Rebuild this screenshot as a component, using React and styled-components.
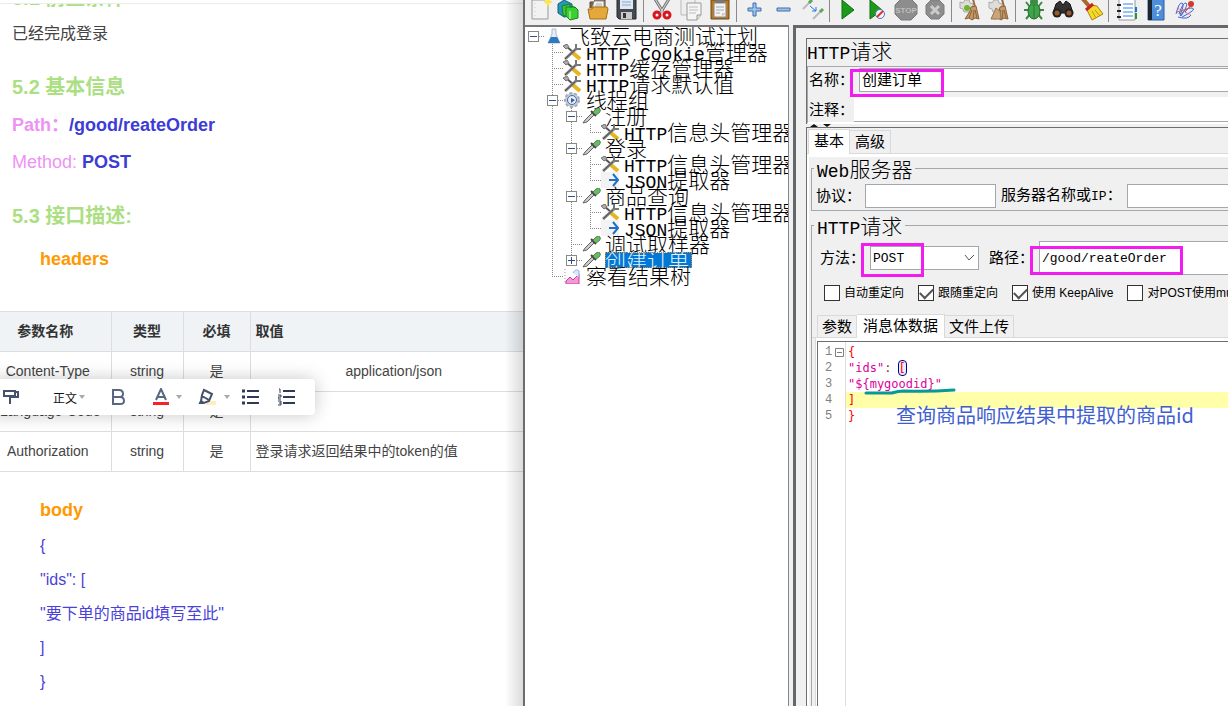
import React, { Component } from 'react';
import styled, { createGlobalStyle, css } from 'styled-components';

const sans = '"Liberation Sans", "Noto Sans CJK SC", sans-serif';
const song = '"Noto Sans CJK SC", sans-serif';
const mono = '"Liberation Mono", "Noto Sans CJK SC", monospace';

const GlobalStyle = createGlobalStyle`
    * { box-sizing: border-box; }
    body { margin: 0; background: #fff; overflow: hidden; }
    button, input, select { font: inherit; color: inherit; margin: 0; }
`;

const Page = styled.div`
    display: flex;
    height: 100vh;
    overflow: hidden;
    font-family: ${sans};
`;

/* ---------- document ---------- */

const Doc = styled.main`
    position: relative;
    flex: 0 0 523px;
    min-width: 0;
    overflow: hidden;
    color: #444;
`;
const DocTop = styled.div`
    height: 4px;
    border-bottom: 1px solid #ececec;
`;
const DocScroll = styled.div`
    overflow: hidden;
`;
const Heading = styled.h2`
    margin: ${p => p.$top}px 0 0 12px;
    font-size: 20px;
    line-height: 28px;
    color: #acdf83;
`;
const Line = styled.p`
    margin: ${p => p.$top}px 0 0 12px;
    font-size: ${p => p.$size || 18}px;
    line-height: 28px;
    color: ${p => p.$color || '#444'};

    strong { color: #3c3cd6; }
    b { color: #ee93f5; }
`;
const SubHeading = styled.h3`
    margin: ${p => p.$top}px 0 0 40px;
    font-size: 18px;
    line-height: 28px;
    color: #ff9900;
`;
const ParamTable = styled.table`
    width: 100%;
    margin-top: 38px;
    border-collapse: collapse;
    table-layout: fixed;
    font-size: 14px;
    line-height: 20px;

    th, td {
        height: 40px;
        padding: 0 0 2px;
        border: 1px solid #dcdde0;
        border-left: 0;
        text-align: center;
        white-space: nowrap;
    }
    th { background: #eff3f6; color: #333; }
    th:first-child { padding-right: 20px; }
    td:first-child { padding-right: 15px; }
    th:last-child { text-align: left; padding-left: 5px; }
    th:last-child, td:last-child { border-right: 0; }
`;
const ValueCell = styled.td`
    && {
        text-align: ${p => (p.$left ? 'left' : 'center')};
        padding-left: ${p => (p.$left ? 5 : 14)}px;
    }
`;
const JsonBody = styled.div`
    margin: 5px 0 0 40px;
    font-size: 16px;
    line-height: 34px;
    color: #4a42d8;
`;
const FloatBar = styled.div`
    position: absolute;
    left: -10px;
    top: 379px;
    width: 325px;
    height: 36px;
    display: flex;
    align-items: center;
    padding-left: 10px;
    background: #fff;
    border-radius: 4px;
    box-shadow: 0 0 18px rgba(0, 0, 0, 0.22);
`;
const FloatButton = styled.button`
    display: flex;
    align-items: center;
    justify-content: center;
    gap: 2px;
    width: ${p => p.$w}px;
    height: 36px;
    padding: 0;
    border: 0;
    background: none;
    font-size: 12px;
    color: #111;
`;
const Caret = styled.i`
    border: 3px solid transparent;
    border-top: 4px solid #aaa;
    border-bottom: 0;
    margin-left: ${p => p.$gap || 0}px;
`;

/* ---------- JMeter window ---------- */

const Win = styled.section`
    position: relative;
    flex: 1;
    min-width: 0;
    display: flex;
    flex-direction: column;
    overflow: hidden;
    border-left: 2px solid #6c6c70;
    background: #f0f0f0;
    color: #000;
`;
const Shade = styled.div`
    position: absolute;
    right: 0;
    top: 0;
    bottom: 0;
    width: 18px;
    background: linear-gradient(to right, rgba(0, 0, 0, 0), rgba(0, 0, 0, 0.14));
`;
const Toolbar = styled.div`
    display: flex;
    flex: none;
    height: 25px;
    overflow: hidden;
`;
const ToolButton = styled.button`
    flex: none;
    width: 29px;
    height: 26px;
    margin-top: -3px;
    padding: 0;
    border: 0;
    background: none;

    svg { display: block; margin: 0 auto; }
`;
const ToolSep = styled.span`
    flex: none;
    width: 1px;
    height: 22px;
    margin: 0 3px 0 2px;
    background: #8a8a8a;
`;
const Split = styled.div`
    flex: 1;
    display: flex;
    min-height: 0;
`;
const TreePane = styled.div`
    flex: 0 0 264px;
    overflow: hidden;
    margin-right: 4px;
    padding-top: 1px;
    border-top: 2px solid #77777c;
    border-right: 1px solid #828790;
    background: #fff;
`;
const TreeRow = styled.div`
    display: flex;
    height: 16px;
    white-space: nowrap;

    svg { flex: none; display: block; }
`;
const TreeText = styled.span`
    height: 16px;
    margin-left: ${p => p.$gap}px;
    padding-right: 3px;
    font-family: ${song};
    font-weight: 300;
    font-size: 21px;
    line-height: 14px;
    ${p => p.$selected && css`
        background: #0078d7;
        color: #e4f1fc;
        outline: 1px dotted #e08a30;
        outline-offset: -1px;
    `}
`;
const Latin = styled.span`
    font-family: ${mono};
    font-weight: 400;
    font-size: ${p => p.$size}px;
`;
const Editor = styled.div`
    flex: 1;
    min-width: 0;
    display: flex;
    flex-direction: column;
    padding: 10px 0 0 10px;
    border-top: 3px solid #66676b;
    border-left: 3px solid #66676b;
`;
const TitlePanel = styled.div`
    height: 86px;
    border-top: 1px solid #6e6e6e;
    border-left: 1px solid #6e6e6e;
`;
const PanelTitle = styled.h1`
    height: 27px;
    margin: 0;
    font-family: ${song};
    font-weight: 300;
    font-size: 21px;
    line-height: 22px;
`;
const NameBox = styled.div`
    border-top: 1px solid #a6a7ac;
    border-left: 1px solid #a6a7ac;
    border-bottom: 2px solid #fff;
    padding-top: 1px;
`;
const FieldRow = styled.div`
    display: flex;
    align-items: center;
    height: ${p => p.$h}px;
    margin-top: ${p => p.$top || 0}px;
`;
const FieldLabel = styled.label`
    flex: none;
    width: ${p => p.$w}px;
    padding-left: ${p => p.$pad || 0}px;
    padding-bottom: 2px;
    font-family: ${song};
    font-size: 15px;
    line-height: 22px;
    white-space: nowrap;
`;
const Control = styled.div`
    position: relative;
    flex: ${p => (p.$w ? `0 0 ${p.$w}px` : '1')};
    min-width: 0;
    height: ${p => p.$h || 24}px;

    input, select {
        display: block;
        width: 100%;
        height: 100%;
        padding: 0 2px ${p => (p.$size ? 2 : 0)}px;
        border: 1px solid #a6a7ac;
        border-right-width: ${p => (p.$w ? 1 : 0)}px;
        border-radius: 0;
        outline: 0;
        background: #fff;
        appearance: none;
        font-family: ${mono};
        font-size: ${p => p.$size || 13}px;
    }
    > svg { position: absolute; right: 4px; top: 8px; pointer-events: none; }
`;
const CommentInput = styled.input`
    flex: 1;
    min-width: 0;
    height: 25px;
    border: 0;
    border-bottom: 1px solid #a6a7ac;
    background: #fff;
    outline: 0;
`;
const Mark = styled.span`
    position: absolute;
    left: -9px;
    top: ${p => p.$top}px;
    width: ${p => p.$w}px;
    height: ${p => p.$h}px;
    border: 3px solid #f31cf0;
    pointer-events: none;
`;
const Arrows = styled.div`
    display: flex;
    gap: 5px;
    height: 3px;
    padding-left: 4px;

    i { border: 4px solid transparent; border-top: 0; border-bottom: 3px solid #111; }
    i + i { border-top: 3px solid #111; border-bottom: 0; }
`;
const TabPanel = styled.div`
    flex: 1;
    display: flex;
    flex-direction: column;
    min-height: 0;
    border-top: 1px solid #6e6e6e;
    border-left: 1px solid #6e6e6e;
`;
const Tabs = styled.div`
    display: flex;
    flex: none;
    align-items: flex-end;
    height: ${p => p.$h}px;
    margin-top: ${p => p.$top || 0}px;
    padding-left: ${p => p.$pad}px;
    border-bottom: 1px solid #d9d9d9;
`;
const Tab = styled.button`
    height: ${p => (p.$active ? p.$h : p.$h - 2)}px;
    margin-bottom: ${p => (p.$active ? -1 : 0)}px;
    padding: 0 ${p => p.$pad}px ${p => (p.$active ? 4 : 2)}px;
    border: 1px solid #d9d9d9;
    border-bottom: 0;
    background: ${p => (p.$active ? '#fff' : '#f0f0f0')};
    font-family: ${song};
    font-size: 15px;
    line-height: 18px;
    white-space: nowrap;

    & + & { border-left: 0; }
`;
const TabBody = styled.div`
    flex: 1;
    display: flex;
    flex-direction: column;
    min-height: 0;
    padding-left: 2px;
    border-top: 3px solid #fff;
    border-left: 2px solid #fff;
`;
const Group = styled.fieldset`
    min-width: 0;
    min-height: 0;
    margin: ${p => p.$top || 0}px 0 0;
    padding: 5px 0 2px;
    border: 1px solid #a6a7ac;
    border-right: 0;
    font-family: ${song};
    ${p => p.$grow && css`
        flex: 1;
        display: flex;
        flex-direction: column;
        padding-bottom: 0;
        border-bottom: 0;
    `}
`;
const Legend = styled.legend`
    height: 22px;
    margin-left: 2px;
    padding: 0 3px;
    font-weight: 300;
    font-size: 21px;
    line-height: 22px;
`;
const Checks = styled.div`
    display: flex;
    gap: 14px;
    height: 16px;
    margin-top: 10px;
    padding-left: 12px;
`;
const Check = styled.label`
    flex: none;
    display: flex;
    align-items: center;
    gap: 4px;
    font-family: ${sans};
    font-size: 12px;
    line-height: 16px;
    white-space: nowrap;

    input {
        display: grid;
        place-items: center;
        width: 16px;
        height: 16px;
        border: 1px solid #333;
        background: #fff;
        appearance: none;
    }
    input:checked::after {
        content: '';
        width: 11px;
        height: 6px;
        margin-top: -3px;
        border: solid #555;
        border-width: 0 0 2px 2px;
        transform: rotate(-45deg);
    }
`;
const CodeArea = styled.div`
    position: relative;
    flex: 1;
    margin-left: 3px;
    padding: 3px 0 0 1px;
    border-left: 1px solid #d9d9d9;
    background: #fff;
`;
const CodeFrame = styled.div`
    height: 100%;
    padding-top: 2px;
    border-top: 1px solid #6e6e73;
    border-left: 1px solid #6e6e73;
    background: linear-gradient(to right, transparent 27px, #ddd 27px, #ddd 28px, transparent 28px);
    font-family: ${mono};
    font-size: 12px;
    line-height: 16px;
`;
const CodeLine = styled.div`
    display: flex;
    height: 16px;
    white-space: pre;
    color: ${p => p.$color};
`;
const LineNo = styled.span`
    position: relative;
    flex: 0 0 28px;
    padding-left: 7px;
    color: #808080;

    svg { position: absolute; left: 17px; top: 4px; }
`;
const CodeText = styled.code`
    flex: 1;
    padding-left: 2px;
    background: ${p => (p.$current ? '#ffffaa' : 'none')};
    font-family: "DejaVu Sans Mono", monospace;

    em { color: #803030; font-style: normal; }
    mark {
        background: #eaeaff;
        color: #f00;
        outline: 1px solid #000080;
        border-radius: 3px;
    }
`;
const Note = styled.span`
    position: absolute;
    left: 80px;
    top: 63px;
    font-family: ${song};
    font-size: 20px;
    line-height: 28px;
    color: #3f5fd0;
    white-space: nowrap;
`;
const Underline = styled.svg`
    position: absolute;
    left: 47px;
    top: 49px;
`;

/* ---------- drawings ---------- */

const broom = (
    <g>
        <path d="M15 1l2 8" stroke="#9a6a3c" strokeWidth="2" />
        <path d="M13 9l5-1 3 13-4-1-3 2-3-2-4 1 5-8z" fill="#c59a6a" stroke="#8d6238" />
        <path d="M14 12l-3 8M16 12l-1 9M17 12l2 8" stroke="#8d6238" />
    </g>
);
const gearBit = <path d="M2 4l3 1 2-3h4l1 3 3 1-1 5-2 3H6l-1-3-3-1z" fill="#deded8" stroke="#aaa" />;
const toolIcons = {
    new: <g><path d="M4 2h16v19H4z" fill="#f2f2f2" stroke="#999" /><circle cx="20" cy="4" r="3" fill="#ffef70" /><path d="M20 0v9M16 4h8" stroke="#f1dc4c" /><path d="M7 5v14" stroke="#ccc" strokeDasharray="1 3" /></g>,
    templates: <g><path d="M1 6l6-4 8 4v12l-8 1-6-4z" fill="#2498b5" stroke="#11657d" /><path d="M5 8l8-2v14l-7-3z" fill="#46bd43" stroke="#198328" /><path d="M9 9h9l3 3v8l-8 2-4-4z" fill="#3bd030" stroke="#168524" /><path d="M13 13v8" stroke="#d6ffd0" /><path d="M14 10q0-4 4 0" fill="none" stroke="#168524" /></g>,
    open: <g><path d="M4 10V4h4l1-3h10v10" fill="#8a633c" stroke="#5d4632" /><path d="M8 3h10v8H6z" fill="#f4f4f4" stroke="#888" /><path d="M10 6h6M9 8h7" stroke="#aaa" /><path d="M2 11h4l1-2h14l1 2-2 10H4z" fill="#e5a83b" stroke="#a86e12" /></g>,
    save: <g><path d="M2 1h19v20H4l-2-2z" fill="#454950" stroke="#24272b" /><path d="M5 1h13v10H5z" fill="#dfe9f3" /><path d="M7 4h9M7 7h9" stroke="#8aa9c9" /><path d="M6 14h11v7H6z" fill="#c9c9c9" /><path d="M8 15h3v5H8z" fill="#333" /></g>,
    cut: <g><path d="M5 1l8 13M19 1l-8 13" stroke="#777" strokeWidth="3" /><path d="M5 1l8 13M19 1l-8 13" stroke="#ddd" /><ellipse cx="7" cy="17" rx="3" ry="3" fill="none" stroke="#d8141c" strokeWidth="3" /><ellipse cx="17" cy="17" rx="3" ry="3" fill="none" stroke="#d8141c" strokeWidth="3" /></g>,
    copy: <g><path d="M2 1h14v16H2z" fill="#eee" stroke="#bbb" /><path d="M8 5h14v12l-4 5H8z" fill="#f5f5f5" stroke="#999" /><path d="M10 9h9M10 12h9M10 15h7" stroke="#bbb" /><path d="M18 22v-5h4" fill="#ddd" stroke="#999" /></g>,
    paste: <g><path d="M3 2h18v19H3z" fill="#b87a29" stroke="#704813" /><path d="M6 5h12v14H6z" fill="#f3f3f3" stroke="#888" /><path d="M8 2h8v3H8z" fill="#777" /><path d="M8 9h8M8 12h8M8 15h4" stroke="#aaa" /><path d="M14 19v-4h4" fill="#ccc" /></g>,
    plus: <path d="M10 5h3v5h5v3h-5v5h-3v-5H5v-3h5z" fill="#9cc2ea" stroke="#3d6fae" />,
    minus: <path d="M5 10h13v3H5z" fill="#9cc2ea" stroke="#3d6fae" />,
    toggle: <g><path d="M2 11l8-8M12 21l8-8" stroke="#bbb" strokeWidth="2" /><path d="M8 5l3-3M19 14l3-3" stroke="#58a858" strokeWidth="3" /><path d="M9 8l6 5m0-4v4h-4" fill="none" stroke="#2877df" /></g>,
    run: <path d="M6 2l12 10L6 21z" fill="#1a9c1a" stroke="#0e6e12" />,
    runNo: <g><path d="M5 2l12 10L5 21z" fill="#1a9c1a" stroke="#0e6e12" /><circle cx="15" cy="16" r="4.5" fill="#f1f4fa" stroke="#5578b5" /><path d="M12 19l6-6" stroke="#d33" strokeWidth="2" /></g>,
    stop: <g><path d="M7 1h10l6 6v9l-6 6H7l-6-6V7z" fill="#8d8d8d" stroke="#7a7a7a" /><text x="12" y="15" fontSize="8" fontWeight="bold" textAnchor="middle" fill="#bdbdbd" fontFamily="Liberation Sans">STOP</text></g>,
    shut: <g><path d="M8 2h8l5 5v9l-5 5H8l-5-5V7z" fill="#8d8d8d" stroke="#7a7a7a" /><path d="M8 8l8 8M16 8l-8 8" stroke="#ccc" strokeWidth="3" /></g>,
    clear: <g>{gearBit}<circle cx="9" cy="10" r="3" fill="#6db52e" />{broom}</g>,
    clearAll: <g>{gearBit}{broom}<path d="M4 21l5-11 4 3 1 8z" fill="#c9a57d" stroke="#98734c" /></g>,
    bug: <g><path d="M4 4l4 5M20 4l-4 5M2 12h20M4 21l5-6M20 21l-5-6" stroke="#3c8743" strokeWidth="2" /><ellipse cx="12" cy="13" rx="6" ry="8" fill="#41a34b" stroke="#22692c" /><circle cx="12" cy="4" r="4" fill="#388f42" /><path d="M12 7v14" stroke="#277a31" /></g>,
    find: <g><path d="M5 6l4-3 3 4 3-4 4 3 3 9H2z" fill="#333" stroke="#111" /><circle cx="6" cy="15" r="4.5" fill="#222" /><circle cx="18" cy="15" r="4.5" fill="#222" /><circle cx="6" cy="15" r="2.5" fill="#9b5a2a" /><circle cx="18" cy="15" r="2.5" fill="#9b5a2a" /></g>,
    broom: <g><path d="M2 0l7 8" stroke="#a5692c" strokeWidth="4" /><path d="M11 7l6 1 6 8-11 6-5-10z" fill="#f6da29" stroke="#a38312" /><path d="M6 12l7-6" stroke="#c92222" strokeWidth="3" /><path d="M12 13l4 7M15 12l5 6" stroke="#b9961b" /></g>,
    list: <g><path d="M4 1h16v21H4z" fill="#fff" stroke="#999" /><path d="M8 6h10M8 10h10M8 14h10M8 18h10" stroke="#2a86ee" /><path d="M2 7h4M2 13h4M2 19h4" stroke="#222" strokeWidth="2" /><path d="M21 9v5" stroke="#1673d8" strokeWidth="2" /><path d="M21 15v6" stroke="#239a2d" strokeWidth="2" /></g>,
    help: <g><path d="M4 1h16v21H4z" fill="#4c8edb" stroke="#2c5f9d" /><path d="M4 1h4v21H4z" fill="#1d2530" /><text x="14" y="18" fontSize="17" textAnchor="middle" fill="#fff" fontFamily="Liberation Serif">?</text></g>,
    feather: <g><path d="M3 16Q6 4 9 5t-2 12M6 16Q10 4 13 5t-5 13M7 18q6-9 12-8t-10 9M5 19q10 3 13-2" stroke="#4565c8" fill="#e5ebfa" /><path d="M4 10l14 7M4 14l13-4" stroke="#d65555" strokeDasharray="2 1" /><path d="M12 14l6-7" stroke="#d34a2e" /><circle cx="18" cy="6" r="3" fill="#d43a2c" /></g>
};
const tools = [
    ['new', '新建'], ['templates', '模板'], ['open', '打开'], ['save', '保存'], null,
    ['cut', '剪切'], ['copy', '复制'], ['paste', '粘贴'], null,
    ['plus', '展开'], ['minus', '折叠'], ['toggle', '切换'], null,
    ['run', '启动'], ['runNo', '不停顿启动'], ['stop', '停止'], ['shut', '关闭'], null,
    ['clear', '清除'], ['clearAll', '清除全部'], null,
    ['bug', '调试'], ['find', '搜索'], ['broom', '重置搜索'], null,
    ['list', '函数助手'], ['help', '帮助'], ['feather', '关于']
];

const treeIcons = {
    plan: <g><path d="M8 1h4v5l4 9H4l4-9z" fill="#e5edf5" stroke="#a8bccd" /><path d="M7 9h6l3 6H4z" fill="#2d77c5" /></g>,
    tools: <g><path d="M2 1l9 8" stroke="#555" strokeWidth="2" /><path d="M10 9l7 6" stroke="#e6b61e" strokeWidth="4" /><path d="M2 15L14 4" stroke="#8b8b8b" strokeWidth="3" /><path d="M2 15L14 4" stroke="#444" /><path d="M13 0v5h5" fill="none" stroke="#777" strokeWidth="2" /><path d="M0 2l4-2 2 3-3 2z" fill="#aaa" stroke="#777" /></g>,
    gear: <g><circle cx="9" cy="8" r="7" fill="#c3cbd9" stroke="#a3acbd" strokeWidth="2" strokeDasharray="3 2" /><circle cx="9" cy="8" r="4.5" fill="#e9eef7" stroke="#53698f" /><path d="M8 6l4 2-4 3z" fill="#2860b8" /></g>,
    sampler: <g><path d="M1 15l2-3 8-8 2 2-8 8z" fill="#c8c8c8" stroke="#666" /><path d="M9 3l5 5" stroke="#444" strokeWidth="2" /><path d="M11 4l3-3q3-2 4 0t-1 4l-3 2z" fill="#6fb869" stroke="#4b8c4b" /></g>,
    json: <g><path d="M0 0h18v16H0z" fill="#f3f3f4" /><path d="M8 8h9M12 2l5 6-5 6" fill="none" stroke="#1f6fc8" strokeWidth="2" /></g>,
    result: <g><path d="M2 1v15" stroke="#999" strokeDasharray="1 2" /><path d="M3 13l4-4 3 3 6-6v10H3z" fill="#f29ad8" stroke="#d23a9e" /><path d="M10 5q3-5 6-2v6" fill="#dbe8fc" stroke="#8eb0e8" /></g>
};
const treeData = [
    { level: 0, icon: 'plan', text: '飞致云电商测试计划', box: '-' },
    { level: 1, icon: 'tools', text: 'HTTP Cookie管理器' },
    { level: 1, icon: 'tools', text: 'HTTP缓存管理器' },
    { level: 1, icon: 'tools', text: 'HTTP请求默认值' },
    { level: 1, icon: 'gear', text: '线程组', box: '-' },
    { level: 2, icon: 'sampler', text: '注册', box: '-' },
    { level: 3, icon: 'tools', text: 'HTTP信息头管理器', last: true },
    { level: 2, icon: 'sampler', text: '登录', box: '-' },
    { level: 3, icon: 'tools', text: 'HTTP信息头管理器' },
    { level: 3, icon: 'json', text: 'JSON提取器', last: true },
    { level: 2, icon: 'sampler', text: '商品查询', box: '-' },
    { level: 3, icon: 'tools', text: 'HTTP信息头管理器' },
    { level: 3, icon: 'json', text: 'JSON提取器', last: true },
    { level: 2, icon: 'sampler', text: '调试取样器' },
    { level: 2, icon: 'sampler', text: '创建订单', box: '+', last: true, selected: true },
    { level: 1, icon: 'result', text: '察看结果树', last: true }
];

// one 19px column of the tree: dotted branch lines and the +/- box
const Guide = ({ own, last, box, top }) => (
    <svg width="19" height="16" fill="none" stroke="#888" strokeDasharray="1 1">
        {top ? null : <path d={own && last ? 'M8.5 0V8' : 'M8.5 0V16'} />}
        {own ? <path d="M8 8.5H19" /> : null}
        {box ? (
            <g strokeDasharray="none">
                <rect x="3.5" y="3.5" width="10" height="10" fill="#fff" stroke="#888" />
                <path d={box === '+' ? 'M5 8.5h7M8.5 5v7' : 'M5 8.5h7'} stroke="#30508c" />
            </g>
        ) : null}
    </svg>
);

// Latin runs are set in a narrower monospace than the Chinese around them
const Mixed = ({ text, size }) => text.split(/([\x20-\x7e]+)/).map((part, idx) => (
    idx % 2 ? <Latin key={idx} $size={size}>{part}</Latin> : part
));

const Tree = () => (
    <TreePane>
        {treeData.map((row, idx) => (
            <TreeRow key={idx}>
                {Array.from({ length: row.level }, (_, n) => <Guide key={n} top={n === 0} />)}
                <Guide own top={row.level === 0} last={row.last} box={row.box} />
                <svg width="19" height="16" fill="none">{treeIcons[row.icon]}</svg>
                <TreeText $gap={row.level === 0 ? 6 : 4} $selected={row.selected}>
                    <Mixed text={row.text} size={18} />
                </TreeText>
            </TreeRow>
        ))}
    </TreePane>
);

const FormatBar = () => (
    <FloatBar>
        <FloatButton $w={22} aria-label="格式刷">
            <svg width="18" height="18" fill="none" stroke="#45526b" strokeWidth="2">
                <path d="M2 3h11v5H2zM13 4h3v5H8v3M8 11v5" />
            </svg>
        </FloatButton>
        <FloatButton $w={94}>正文<Caret /></FloatButton>
        <FloatButton $w={4} aria-label="加粗">
            <svg width="16" height="18" fill="none" stroke="#5a6782" strokeWidth="2" style={{ flex: 'none' }}>
                <path d="M3 2h6q4 0 4 4 0 3-4 3H3zM3 9h7q4 0 4 4 0 3-4 3H3z" />
            </svg>
        </FloatButton>
        <FloatButton $w={94} aria-label="字体颜色">
            <svg width="16" height="18" fill="none">
                <path d="M3 12L8 1l5 11M5 9h6" stroke="#5a6782" strokeWidth="2" />
                <path d="M0 14h16v3H0z" fill="#f5222d" />
            </svg>
            <Caret $gap={5} />
        </FloatButton>
        <FloatButton $w={2} aria-label="背景颜色">
            <svg width="34" height="18" fill="none" style={{ flex: 'none' }}>
                <path d="M8 13h10v4H8z" fill="#ffeebb" />
                <path d="M6 2l8 4-3 7-5 2-3-2 1-6zM4 8l7 4M3 13l-1 2h4" stroke="#45526b" strokeWidth="2" />
                <path d="M26 7h6l-3 4z" fill="#aaa" />
            </svg>
        </FloatButton>
        <FloatButton $w={68} aria-label="无序列表">
            <svg width="17" height="16" fill="none" stroke="#2f3a56" strokeWidth="2">
                <path d="M0 2h3M0 8h3M0 14h3" strokeWidth="3" /><path d="M5 2h12M5 8h12M5 14h12" />
            </svg>
        </FloatButton>
        <FloatButton $w={4} aria-label="有序列表">
            <svg width="17" height="18" fill="none" stroke="#2f3a56" style={{ flex: 'none' }}>
                <path d="M5 3h12M5 9h12M5 15h12" strokeWidth="2" />
                <path d="M1 1h1v4M0 7h3v2H0v2h3M0 13h3v4H0M1 15h2" />
            </svg>
        </FloatButton>
    </FloatBar>
);

const Document = () => (
    <Doc>
        <DocTop />
        <DocScroll>
            <Heading $top={-20}>5.1 前置条件</Heading>
            <Line $top={8} $size={16}>已经完成登录</Line>
            <Heading $top={25}>5.2 基本信息</Heading>
            <Line $top={10}><b>Path：</b><strong>/good/reateOrder</strong></Line>
            <Line $top={9} $color="#ee93f5">Method: <strong>POST</strong></Line>
            <Heading $top={26}>5.3 接口描述:</Heading>
            <SubHeading $top={15}>headers</SubHeading>
            <ParamTable>
                <colgroup>
                    <col width="111" /><col width="72" /><col width="67" /><col />
                </colgroup>
                <thead>
                    <tr><th>参数名称</th><th>类型</th><th>必填</th><th>取值</th></tr>
                </thead>
                <tbody>
                    <tr><td>Content-Type</td><td>string</td><td>是</td><ValueCell>application/json</ValueCell></tr>
                    <tr><td>Language-Code</td><td>string</td><td>是</td><ValueCell /></tr>
                    <tr><td>Authorization</td><td>string</td><td>是</td><ValueCell $left>登录请求返回结果中的token的值</ValueCell></tr>
                </tbody>
            </ParamTable>
            <SubHeading $top={24}>body</SubHeading>
            <JsonBody>
                <div>{'{'}</div>
                <div>"ids": [</div>
                <div>"要下单的商品id填写至此"</div>
                <div>]</div>
                <div>{'}'}</div>
            </JsonBody>
        </DocScroll>
        <Shade />
        <FormatBar />
    </Doc>
);

const Code = () => (
    <CodeArea>
        <CodeFrame>
            <CodeLine $color="#f00">
                <LineNo>1<svg width="10" height="10" fill="none" stroke="#808080"><path d="M.5.5h8v8h-8zM2 4.5h5" /></svg></LineNo>
                <CodeText>{'{'}</CodeText>
            </CodeLine>
            <CodeLine $color="#dc009c"><LineNo>2</LineNo><CodeText>"ids"<em>: </em><mark>[</mark></CodeText></CodeLine>
            <CodeLine $color="#dc009c"><LineNo>3</LineNo><CodeText>{'"${mygoodid}"'}</CodeText></CodeLine>
            <CodeLine $color="#f00"><LineNo>4</LineNo><CodeText $current>]</CodeText></CodeLine>
            <CodeLine $color="#f00"><LineNo>5</LineNo><CodeText>{'}'}</CodeText></CodeLine>
        </CodeFrame>
        <Underline width="94" height="8" fill="none">
            <path d="M3 6q16 0 26 0 6-2 12-2 24 1 50-1" stroke="#089898" strokeWidth="3" strokeLinecap="round" />
        </Underline>
        <Note>查询商品响应结果中提取的商品id</Note>
    </CodeArea>
);

class App extends Component {
    constructor(props) {
        super(props);

        this.state = {
            name: '创建订单',
            path: '/good/reateOrder'
        };
    }

    render() {
        const { name, path } = this.state;
        return (
            <Page>
                <GlobalStyle />
                <Document />
                <Win>
                    <Toolbar>
                        {tools.map((tool, idx) => (
                            tool
                                ? (
                                    <ToolButton key={idx} aria-label={tool[1]}>
                                        <svg width="24" height="24" fill="none">{toolIcons[tool[0]]}</svg>
                                    </ToolButton>
                                ) : <ToolSep key={idx} />
                        ))}
                    </Toolbar>
                    <Split>
                        <Tree />
                        <Editor>
                            <TitlePanel>
                                <PanelTitle><Mixed text="HTTP请求" size={18} /></PanelTitle>
                                <NameBox>
                                    <FieldRow $h={24}>
                                        <FieldLabel htmlFor="name" $w={51} $pad={1}>名称：</FieldLabel>
                                        <Control $size={15}>
                                            <input id="name" value={name} onChange={e => this.setState({ name: e.target.value })} />
                                            <Mark $top={1} $w={94} $h={28} />
                                        </Control>
                                    </FieldRow>
                                    <FieldRow $h={25} $top={5}>
                                        <FieldLabel htmlFor="comment" $w={46} $pad={1}>注释：</FieldLabel>
                                        <CommentInput id="comment" />
                                    </FieldRow>
                                </NameBox>
                            </TitlePanel>
                            <Arrows><i /><i /></Arrows>
                            <TabPanel>
                                <Tabs $h={26} $pad={1}>
                                    <Tab $h={25} $pad={5} $active>基本</Tab>
                                    <Tab $h={25} $pad={5}>高级</Tab>
                                </Tabs>
                                <TabBody>
                                    <Group>
                                        <Legend><Mixed text="Web服务器" size={18} /></Legend>
                                        <FieldRow $h={24}>
                                            <FieldLabel htmlFor="protocol" $w={53} $pad={4}>协议：</FieldLabel>
                                            <Control $w={131}><input id="protocol" /></Control>
                                            <FieldLabel htmlFor="server" $w={131} $pad={5}><Mixed text="服务器名称或IP：" size={13} /></FieldLabel>
                                            <Control><input id="server" /></Control>
                                        </FieldRow>
                                    </Group>
                                    <Group $top={3} $grow>
                                        <Legend><Mixed text="HTTP请求" size={18} /></Legend>
                                        <FieldRow $h={34}>
                                            <FieldLabel htmlFor="method" $w={58} $pad={8}>方法：</FieldLabel>
                                            <Control $w={109}>
                                                <select id="method" defaultValue="POST">
                                                    <option>POST</option>
                                                    <option>GET</option>
                                                </select>
                                                <svg width="11" height="8" fill="none" stroke="#555"><path d="M1 1l4 5 5-5" /></svg>
                                                <Mark $top={-3} $w={63} $h={34} />
                                            </Control>
                                            <FieldLabel htmlFor="path" $w={60} $pad={10}>路径：</FieldLabel>
                                            <Control $h={34}>
                                                <input id="path" value={path} onChange={e => this.setState({ path: e.target.value })} />
                                                <Mark $top={5} $w={153} $h={29} />
                                            </Control>
                                        </FieldRow>
                                        <Checks>
                                            <Check><input type="checkbox" />自动重定向</Check>
                                            <Check><input type="checkbox" defaultChecked />跟随重定向</Check>
                                            <Check><input type="checkbox" defaultChecked />使用 KeepAlive</Check>
                                            <Check><input type="checkbox" />对POST使用multipart / form-data</Check>
                                        </Checks>
                                        <Tabs $h={25} $top={12} $pad={5}>
                                            <Tab $h={24} $pad={4}>参数</Tab>
                                            <Tab $h={24} $pad={6} $active>消息体数据</Tab>
                                            <Tab $h={24} $pad={4}>文件上传</Tab>
                                        </Tabs>
                                        <Code />
                                    </Group>
                                </TabBody>
                            </TabPanel>
                        </Editor>
                    </Split>
                </Win>
            </Page>
        );
    }
}

export default App;
